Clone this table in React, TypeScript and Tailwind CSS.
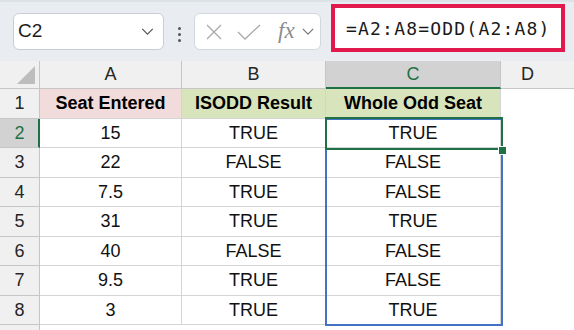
import React from 'react';

const ROW_H = [30, 29, 30, 29, 30, 29, 30, 29];

const DATA: [string, string, string][] = [
  ['15', 'TRUE', 'TRUE'],
  ['22', 'FALSE', 'FALSE'],
  ['7.5', 'TRUE', 'FALSE'],
  ['31', 'TRUE', 'TRUE'],
  ['40', 'FALSE', 'FALSE'],
  ['9.5', 'TRUE', 'FALSE'],
  ['3', 'TRUE', 'TRUE'],
];

function Chevron({ className }: { className?: string }) {
  return (
    <svg viewBox="0 0 14 8" className={className} fill="none" stroke="currentColor" strokeWidth="1.4">
      <path d="M1 1l6 6 6-6" />
    </svg>
  );
}

function Toolbar() {
  return (
    <div className="h-[61px] bg-[#e9edf1] border-t-2 border-[#dde2e7] flex items-start relative">
      {/* Name box */}
      <div className="ml-[13px] mt-[11px] w-[151px] h-[37px] bg-white border border-[#c9ced4] rounded-[6px] flex items-center pl-[4px] pr-[9px]">
        <span className="text-[19px] text-[#1a1a1a] flex-1">C2</span>
        <Chevron className="w-[13px] h-[7px] text-[#555]" />
      </div>
      {/* vertical dots */}
      <div className="ml-[14px] mt-[25px] flex flex-col gap-[3px]">
        <span className="w-[3px] h-[3px] rounded-full bg-[#555]" />
        <span className="w-[3px] h-[3px] rounded-full bg-[#555]" />
        <span className="w-[3px] h-[3px] rounded-full bg-[#555]" />
      </div>
      {/* fx box */}
      <div className="ml-[13px] mt-[11px] w-[127px] h-[37px] bg-white border border-[#d3d8dd] rounded-[6px] flex items-center pl-[11px]">
        <svg viewBox="0 0 16 16" className="w-[16px] h-[16px] text-[#a9a9a9]" fill="none" stroke="currentColor" strokeWidth="1.3">
          <path d="M1 1l14 14M15 1L1 15" />
        </svg>
        <svg viewBox="0 0 24 16" className="ml-[15px] w-[24px] h-[16px] text-[#a9a9a9]" fill="none" stroke="currentColor" strokeWidth="1.3">
          <path d="M1 8l7 7L23 1" />
        </svg>
        <span className="ml-[17px] text-[23px] italic text-[#8c8c8c] leading-none -mt-[3px]" style={{ fontFamily: '"Liberation Serif", serif' }}>fx</span>
        <Chevron className="ml-[7px] w-[12px] h-[7px] text-[#777]" />
      </div>
      {/* formula box */}
      <div className="ml-[10px] mt-[2px] w-[234px] h-[48px] bg-white border-[4px] border-[#e21a4b] flex items-center pl-[11px]">
        <span className="text-[18px] tracking-[1.2px] text-[#1a1a1a]" style={{ fontFamily: '"DejaVu Sans Mono", monospace' }}>
          =A2:A8=ODD(A2:A8)
        </span>
      </div>
    </div>
  );
}

export default function App() {
  return (
    <div className="w-[574px] h-[330px] overflow-hidden bg-white relative" style={{ fontFamily: '"Liberation Sans", Arial, sans-serif' }}>
      <Toolbar />

      {/* Column headers */}
      <div className="flex h-[28px] bg-[#f0f0f0] text-[18px] text-[#262626]">
        <div className="w-[40px] border-r border-b border-[#c6c6c6] relative">
          <div className="absolute right-[4px] bottom-[4px] w-0 h-0 border-l-[18px] border-l-transparent border-b-[18px] border-b-[#bdbdbd]" />
        </div>
        <div className="w-[142px] border-r border-b border-[#c6c6c6] flex items-center justify-center">A</div>
        <div className="w-[144px] border-r border-b border-[#c6c6c6] flex items-center justify-center">B</div>
        <div className="w-[175px] bg-[#d2d2d2] border-r border-[#c6c6c6] border-b-2 border-b-[#1e7145] text-[#1e7145] flex items-center justify-center">C</div>
        <div className="flex-1 border-b border-[#c6c6c6] flex items-center justify-center pr-[20px]">D</div>
      </div>

      {/* Row 1 */}
      <div className="flex text-[18px]" style={{ height: ROW_H[0] }}>
        <div className="w-[40px] bg-[#f0f0f0] border-r border-b border-[#c6c6c6] flex items-center justify-center text-[#262626]">1</div>
        <div className="w-[142px] bg-[#f2dcdb] border-r border-b border-[#d4d4d4] flex items-center justify-center font-bold">Seat Entered</div>
        <div className="w-[144px] bg-[#d8e4bc] border-r border-b border-[#d4d4d4] flex items-center justify-center font-bold">ISODD Result</div>
        <div className="w-[175px] bg-[#d8e4bc] border-r border-b border-[#d4d4d4] flex items-center justify-center font-bold">Whole Odd Seat</div>
        <div className="flex-1" />
      </div>

      {DATA.map((r, i) => {
        const sel = i === 0;
        return (
          <div key={i} className="flex text-[18px] text-[#111]" style={{ height: ROW_H[i + 1] }}>
            <div
              className={
                sel
                  ? 'w-[40px] bg-[#d2d2d2] border-r-2 border-r-[#1e7145] border-b border-b-[#c6c6c6] flex items-center justify-center text-[#1e7145] pl-[1px]'
                  : 'w-[40px] bg-[#f0f0f0] border-r border-b border-[#c6c6c6] flex items-center justify-center text-[#262626]'
              }
            >
              {i + 2}
            </div>
            <div className="w-[142px] border-r border-b border-[#d4d4d4] flex items-center justify-center">{r[0]}</div>
            <div className="w-[144px] border-r border-b border-[#d4d4d4] flex items-center justify-center">{r[1]}</div>
            <div className="w-[175px] border-r border-b border-[#d4d4d4] flex items-center justify-center">{r[2]}</div>
            <div className="flex-1" />
          </div>
        );
      })}

      <div className="flex h-[10px]">
        <div className="w-[40px] bg-[#f0f0f0] border-r border-[#c6c6c6]" />
      </div>

      {/* Range highlight C2:C8 */}
      <div className="absolute left-[325px] top-[118px] w-[178px] h-[208px] border-2 border-[#4472c4] pointer-events-none" />
      {/* Active cell C2 */}
      <div className="absolute left-[325px] top-[117px] w-[178px] h-[33px] border-2 border-[#1e7145] pointer-events-none" />
      {/* Fill handle */}
      <div className="absolute left-[498px] top-[146px] w-[9px] h-[9px] bg-[#1e7145] border-[1.5px] border-white" />
    </div>
  );
}
